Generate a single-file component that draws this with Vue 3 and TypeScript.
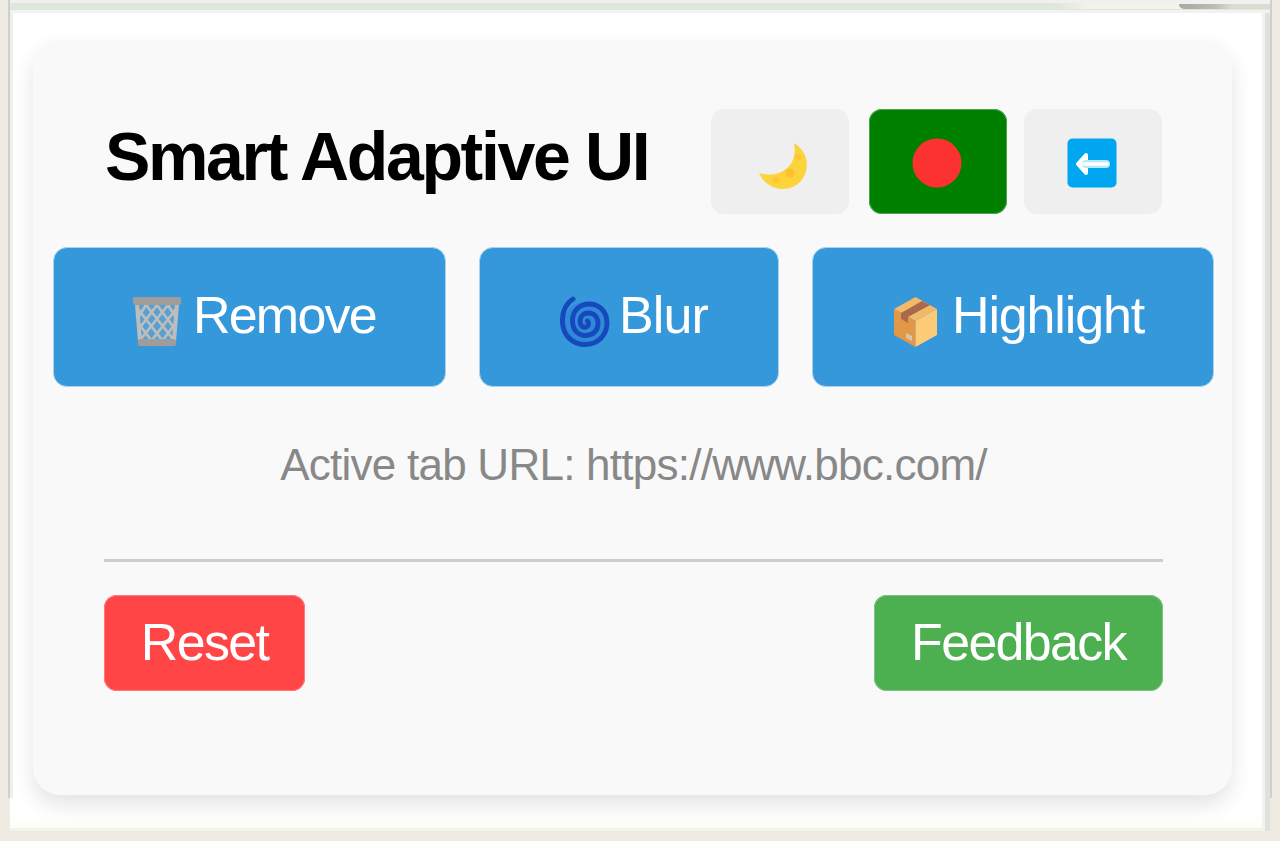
<script setup lang="ts">
type ActionId = 'remove' | 'blur' | 'highlight'
const actions: { id: ActionId; label: string }[] = [
  { id: 'remove', label: 'Remove' },
  { id: 'blur', label: 'Blur' },
  { id: 'highlight', label: 'Highlight' },
]
const activeUrl: string = 'https://www.bbc.com/'
</script>

<template>
  <div class="page">
    <div class="popup">
      <div class="edge edge-left"></div>
      <div class="edge edge-right"></div>
      <div class="edge-line"></div>
      <div class="strip"><span class="strip-light"></span><span class="strip-dark"></span></div>
      <main class="card">
        <header class="header">
          <h1>Smart Adaptive UI</h1>
          <button class="tool" aria-label="Dark mode">
            <svg width="50" height="50" viewBox="0 0 50 50">
              <path d="M36 2C46 8 51 19 48 30C45 42 34 49 23 48C13 47 5 41 1 32C10 35 21 34 28 28C36 22 38 12 36 2Z" fill="#fdd33c" />
              <circle cx="32" cy="32" r="4.5" fill="#fbc130" />
              <circle cx="18" cy="39" r="3.5" fill="#fcc934" />
              <circle cx="40" cy="16" r="3" fill="#fcc934" />
            </svg>
          </button>
          <button class="tool on" aria-label="Toggle">
            <svg width="50" height="50" viewBox="0 0 50 50"><circle cx="25" cy="25" r="24.5" fill="#fb3230" /></svg>
          </button>
          <button class="tool back" aria-label="Back">
            <svg width="50" height="50" viewBox="0 0 50 50">
              <rect x=".5" y=".5" width="49" height="49" rx="5" fill="#00a6f0" />
              <path d="M11 26L19 17V35Z" fill="#fff" stroke="#fff" stroke-width="4" stroke-linejoin="round" />
              <path d="M19 26H39" stroke="#b9e6fb" stroke-width="8" stroke-linecap="round" />
              <path d="M17 26H40" stroke="#fff" stroke-width="3.500" stroke-linecap="round" />
            </svg>
          </button>
        </header>

        <div class="actions">
          <button v-for="a in actions" :key="a.id" class="action" :class="a.id">
            <svg v-if="a.id === 'remove'" width="50" height="52" viewBox="0 0 50 52">
              <path d="M5 9L8 46H42L45 9Z" fill="#a6b4bd" fill-opacity=".3" />
              <g fill="none" stroke="#bdbdbd" stroke-width="2.8">
                <path d="M5 9L8 45M45 9L42 45" stroke-width="4" />
                <path d="M14 9L7 20M25 9L7 33M36 9L9 43M44 13L20 44M43 28L31 44M36 9L43 20M25 9L43 33M14 9L41 43M6 13L30 44M7 28L19 44" />
              </g>
              <rect x="1" y="1" width="48" height="8" rx="2" fill="#a09c9b" />
              <rect x="6" y="43" width="38" height="7" rx="2" fill="#a09c9b" />
            </svg>
            <svg v-else-if="a.id === 'blur'" width="50" height="52" viewBox="0 0 50 52">
              <circle cx="25" cy="27" r="21" fill="#286fd0" fill-opacity=".35" />
              <path
                d="M13 3C5 8 2 17 2.500 27C3.500 40 13 48.500 25 48.500C38 48.500 47 39 47 27C47 15 39 8 29 8C19 8 12.500 15.500 12.500 24.500C12.500 34 18 39.500 26 39.500C33.500 39.500 38 34 38 27.500C38 21 34 17 28.500 17C23 17 20 21 20 25.500C20 29.500 23 32 26 31C29 30 29 27 27.500 25"
                fill="none"
                stroke="#1549bd"
                stroke-width="4.900"
                stroke-linecap="round"
              />
            </svg>
            <svg v-else width="46" height="52" viewBox="0 0 46 52">
              <path d="M22.500 1L44 13L22.500 25L1 13Z" fill="#f1b968" />
              <path d="M1 13L22.500 25V51L1 39Z" fill="#e39848" />
              <path d="M44 13L22.500 25V51L44 39Z" fill="#fdcb78" />
              <path d="M29 5L37 9L15 21V27L8 23V17Z" fill="#a9694d" />
              <path d="M13 37L19 40V45L13 42Z" fill="#dfc3a6" />
            </svg>
            <span>{{ a.label }}</span>
          </button>
        </div>

        <p class="url">Active tab URL: {{ activeUrl }}</p>
        <footer class="footer">
          <button class="foot reset">Reset</button>
          <button class="foot feedback">Feedback</button>
        </footer>
      </main>
    </div>
  </div>
</template>

<style>
body {
  margin: 0;
  overflow: hidden;
}
</style>

<style scoped>
.page {
  box-sizing: border-box;
  height: 841px;
  padding: 0 10px 10px;
  background: #eeebe2;
  font-family: 'Liberation Sans', Arial, sans-serif;
}
.popup {
  position: relative;
  box-sizing: border-box;
  height: 831px;
  padding: 40px 38px 0 23px;
  background: linear-gradient(#fff 0 817px, #fcfef5 828px, #f3f4e8 828px);
}
.strip {
  position: absolute;
  inset: 0 0 auto;
  height: 13px;
  background: linear-gradient(#f0f0f0 0 3px, #dfe6da 3px 10px, #f2f2f2 10px);
}
.strip-light {
  position: absolute;
  left: 1045px;
  right: 0;
  top: 3px;
  height: 6px;
  background: linear-gradient(90deg, #dfe6da, #f1f4e9 35px);
}
.strip-dark {
  position: absolute;
  left: 1169px;
  right: 0;
  top: 4px;
  height: 5px;
  border-radius: 0 0 0 9px;
  background: linear-gradient(90deg, #a9aaa4, #b9bdb1 35px, #d8dcd1 53px);
}
.edge {
  position: absolute;
  top: 10px;
}
.edge-left {
  left: -2px;
  top: 0;
  width: 3px;
  height: 798px;
  border-left: 2px solid #cfcfcd;
  background: #efefef;
}
.edge-right {
  right: 0;
  width: 5px;
  bottom: 0;
  border-left: 3px solid #f0f4ea;
  background: #dfe1df;
}
.edge-line {
  position: absolute;
  right: -2px;
  top: 0;
  width: 2px;
  height: 798px;
  background: #d0cfcc;
}
.card {
  position: relative;
  box-sizing: border-box;
  height: 755px;
  padding: 69px 18px 0 20px;
  border-radius: 27px;
  background: #f9f9f9;
  box-shadow: 0 10px 21px rgba(0, 0, 0, 0.11);
}
button {
  box-sizing: border-box;
  margin: 0;
  border: 0;
  padding: 0;
  font: inherit;
}
svg {
  display: block;
  flex: none;
}
.header {
  display: flex;
  height: 105px;
  padding: 0 52px 0 52px;
}
h1 {
  flex: 1;
  margin: 0;
  font-size: 68px;
  line-height: 95px;
  letter-spacing: -2.35px;
  white-space: nowrap;
  color: #000;
}
.tool {
  display: flex;
  justify-content: center;
  align-items: center;
  width: 138px;
  height: 105px;
  margin-left: 20px;
  border-radius: 13px;
  background: #efefef;
}
.tool:first-of-type svg {
  margin: 8px 0 0 6px;
}
.tool.on {
  background: #008000;
  box-shadow: inset 0 0 0 1px #4da64d;
}
.tool.on svg {
  margin: 3px 2px 0 0;
}
.tool.back {
  margin-left: 17px;
}
.tool.back svg {
  margin: 3px 2px 0 0;
}
.actions {
  display: flex;
  justify-content: space-between;
  height: 140px;
  margin-top: 33px;
}
.action {
  display: flex;
  padding: 48px 0 0 80px;
  border: 1px solid #a9d2ef;
  border-radius: 14px;
  background: #3598db;
  color: #fff;
  font-size: 52px;
  letter-spacing: -0.9px;
}
.action span {
  margin-left: 9px;
  line-height: 38px;
  white-space: nowrap;
}
.remove {
  width: 393px;
  padding-left: 78px;
  letter-spacing: -1.8px;
}
.action.remove span {
  margin-left: 11px;
}
.blur {
  width: 300px;
}
.highlight {
  width: 402px;
  letter-spacing: -1.15px;
}
.action.highlight span {
  margin-left: 13px;
}
.url {
  height: 60px;
  margin: 48px 0 0;
  color: #888;
  font-size: 44px;
  line-height: 60px;
  letter-spacing: -0.75px;
  text-align: center;
  white-space: nowrap;
}
.footer {
  display: flex;
  justify-content: space-between;
  margin: 64px 51px 0;
  padding-top: 33px;
  border-top: 3px solid #ccc;
}
.foot {
  height: 96px;
  padding-bottom: 2px;
  border-radius: 13px;
  color: #fff;
  font-size: 52px;
  line-height: 94px;
  letter-spacing: -1.7px;
}
.reset {
  width: 201px;
  background: #ff4545;
  box-shadow: inset 0 0 0 1px #ff7a7a;
}
.feedback {
  width: 289px;
  background: #4caf50;
  box-shadow: inset 0 0 0 1px #7dc580;
}
</style>
